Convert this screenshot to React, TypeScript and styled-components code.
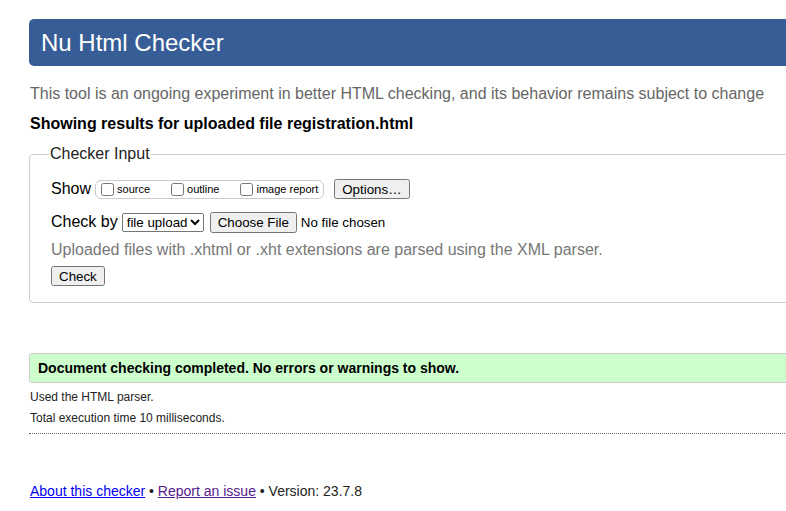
import { createGlobalStyle } from 'styled-components'
import styled from 'styled-components'

const GlobalStyle = createGlobalStyle`
    html, body {
        margin: 0;
        padding: 0;
        overflow: hidden;
        background: #fff;
    }
    body {
        font-family: "Liberation Sans", Arial, sans-serif;
        font-size: 16px;
        color: #000;
    }
`

const Page = styled.div`
    width: 1100px;
    padding: 19px 0 0 29px;
`

const Title = styled.h1`
    margin: 0;
    height: 47px;
    box-sizing: border-box;
    padding: 0 12px;
    display: flex;
    align-items: center;
    background: #365d95;
    color: #fff;
    font-size: 24px;
    font-weight: normal;
    border-radius: 5px;
`

const Intro = styled.p`
    margin: 19px 0 0 1px;
    color: #666;
    font-size: 16px;
    line-height: 18px;
`

const Results = styled.p`
    margin: 12px 0 0 1px;
    font-weight: bold;
    font-size: 16px;
    line-height: 18px;
`

const Fieldset = styled.fieldset`
    margin: 12px 0 0 0;
    padding: 4px 0 16px 21px;
    border: 1px solid #ccc;
    border-radius: 4px;
    min-width: 0;
`

const Legend = styled.legend`
    padding: 0 1px;
    margin-left: -2px;
    font-size: 16px;
    line-height: 18px;
    color: #222;
`

const Row = styled.div<{ $top: number }>`
    display: flex;
    align-items: center;
    margin-top: ${({ $top }) => $top}px;
    height: 22px;
`

const Label = styled.span`
    font-size: 16px;
    margin-right: 4px;
`

const OptionGroup = styled.span`
    display: inline-flex;
    align-items: center;
    height: 17px;
    border: 1px solid #ccc;
    border-radius: 6px;
    padding: 0 5px 0 4px;
    gap: 20px;
    margin-right: 10px;
`

const Option = styled.label`
    display: inline-flex;
    align-items: center;
    font-size: 11px;
    color: #000;

    input {
        margin: 0 3px 0 1px;
        width: 13px;
        height: 13px;
    }
`

const Button = styled.button`
    font-family: "Liberation Sans", Arial, sans-serif;
    font-size: 13.33px;
    padding: 1px 6px;
    height: 20px;
`

const Select = styled.select`
    font-family: "Liberation Sans", Arial, sans-serif;
    font-size: 13.33px;
    height: 19px;
    width: 82px;
    margin-right: 6px;
    padding: 0;
`

const FileInput = styled.input`
    font-family: "Liberation Sans", Arial, sans-serif;
    font-size: 13.33px;
`

const Note = styled.p`
    margin: 8px 0 0 0;
    color: #777;
    font-size: 16px;
    line-height: 18px;
`

const CheckRow = styled.div`
    margin-top: 7px;
`

const Success = styled.div`
    margin-top: 50px;
    height: 30px;
    box-sizing: border-box;
    display: flex;
    align-items: center;
    padding-left: 8px;
    background: #ccffcc;
    border: 1px solid #ccc;
    border-radius: 3px;
    font-weight: bold;
    font-size: 14px;
`

const Detail = styled.p<{ $top: number }>`
    margin: ${({ $top }) => $top}px 0 0 1px;
    font-size: 12px;
    line-height: 14px;
    color: #222;
`

const Divider = styled.hr`
    margin: 8px 0 0 0;
    border: 0;
    border-top: 1px dotted #666;
    height: 0;
`

const Footer = styled.p`
    margin: 49px 0 0 1px;
    font-size: 14px;
    line-height: 16px;
    color: #222;

    a {
        color: #0000ee;
    }
    a.visited {
        color: #551a8b;
    }
`

export default function App() {
    return (
        <>
            <GlobalStyle />
            <Page>
                <Title>Nu Html Checker</Title>
                <Intro>This tool is an ongoing experiment in better HTML checking, and its behavior remains subject to change</Intro>
                <Results>Showing results for uploaded file registration.html</Results>
                <Fieldset>
                    <Legend>Checker Input</Legend>
                    <Row $top={11}>
                        <Label>Show</Label>
                        <OptionGroup>
                            <Option><input type="checkbox" />source</Option>
                            <Option><input type="checkbox" />outline</Option>
                            <Option><input type="checkbox" />image report</Option>
                        </OptionGroup>
                        <Button>Options…</Button>
                    </Row>
                    <Row $top={11}>
                        <Label>Check by</Label>
                        <Select defaultValue="file">
                            <option value="file">file upload</option>
                            <option value="address">address</option>
                            <option value="text">text input</option>
                        </Select>
                        <FileInput type="file" />
                    </Row>
                    <Note>Uploaded files with .xhtml or .xht extensions are parsed using the XML parser.</Note>
                    <CheckRow>
                        <Button>Check</Button>
                    </CheckRow>
                </Fieldset>
                <Success>Document checking completed. No errors or warnings to show.</Success>
                <Detail $top={7}>Used the HTML parser.</Detail>
                <Detail $top={7}>Total execution time 10 milliseconds.</Detail>
                <Divider />
                <Footer>
                    <a href="#about">About this checker</a> • <a className="visited" href="#issue">Report an issue</a> • Version: 23.7.8
                </Footer>
            </Page>
        </>
    )
}
